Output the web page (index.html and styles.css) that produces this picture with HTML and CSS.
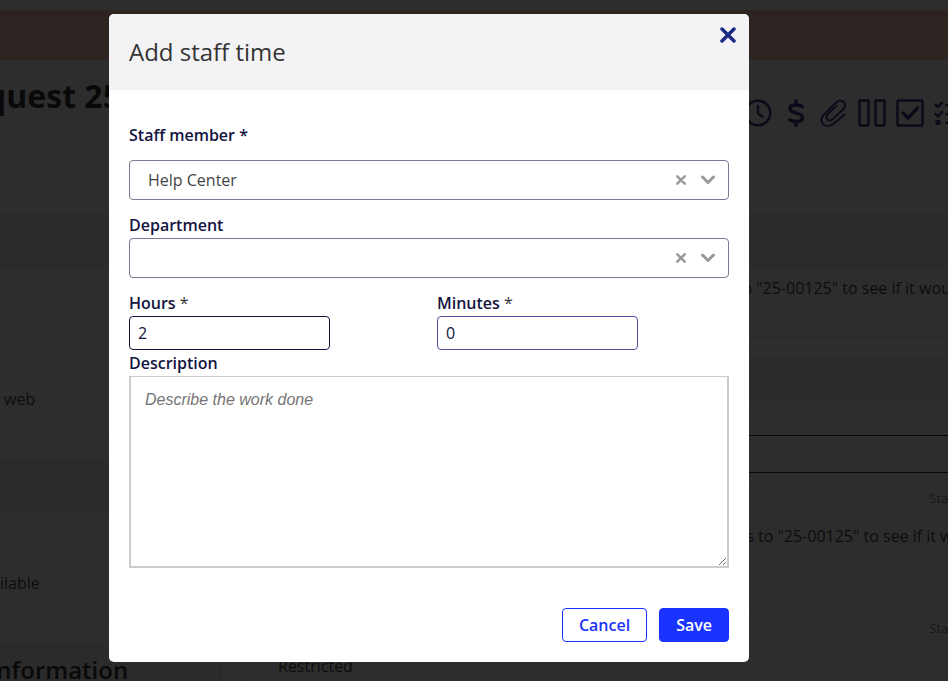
FILE: index.html
```html
<!DOCTYPE html>
<html lang="en">
	<head>
		<meta charset="UTF-8">
		<title>Add staff time</title>
		<link rel="stylesheet" href="styles.css">
	</head>
	<body>
		<div class="page" aria-hidden="true">
			<div class="banner"></div>
			<div class="page-head">
				<h1>Request 25-00125</h1>
				<div class="tools">
					<svg viewBox="0 0 28 28"><circle cx="14" cy="14" r="12.3"/><path d="M14 7v7.500l4.500 3"/></svg>
					<svg viewBox="0 0 28 28"><path class="thick" d="M14 1.700v4M14 22.300v4M20.300 7.500C17 5.500 7.800 4.500 7.800 9.800c0 5.200 12.600 3 12.600 8.600 0 5.500-9.400 4.400-12.700 2.300"/></svg>
					<svg viewBox="0 0 28 28"><path class="thin" d="M24.500 15.500L14 24.500C10 28 5 27.500 3 25 .5 22 1 18.500 4 15.500L15.500 4C18 1.200 21.500 1 23.500 2.800c2.200 2 2 5.200-.5 7.700L12.500 20.200c-1.500 1.500-3.700 1.600-5 .3-1.500-1.500-1.200-3.700.3-5.300l8.700-8.400"/></svg>
					<svg viewBox="0 0 28 28"><rect x="1.500" y="1.500" width="9" height="25" rx="1"/><rect x="17.500" y="1.500" width="9" height="25" rx="1"/></svg>
					<svg viewBox="0 0 28 28"><rect x="1.500" y="1.500" width="25" height="25" rx="1"/><path class="thick" d="M7 14l5 5 9.500-10"/></svg>
					<svg viewBox="0 0 28 28"><path d="M1.500 5.500l2.500 2.500L8 3.500M1.500 15l2.500 2.500L8 13M12.500 6.300h14M12.500 15.300h14M12.500 23.700h14"/><circle cx="4" cy="23.500" r="1.500"/></svg>
				</div>
			</div>
			<div class="columns">
				<div class="side">
					<div class="card">
						<div class="card-head"></div>
						<div class="card-body tall">via web</div>
					</div>
					<div class="card">
						<div class="card-head"></div>
						<div class="card-body status">Available</div>
					</div>
					<div class="card">
						<div class="card-head"><h2>Information</h2></div>
						<div class="card-body"></div>
					</div>
				</div>
				<div class="main">
					<div class="card">
						<div class="card-head"></div>
						<p class="message">I am testing if we can link the new request from the web over to "25-00125" to see if it would work</p>
					</div>
					<div class="card">
						<div class="card-head slim"></div>
						<div class="composer"></div>
						<div class="entry">
							<span class="tag">Staff</span>
							<p>I am testing this new request from the page to see if it now links to "25-00125" to see if it would work</p>
						</div>
						<div class="entry">
							<span class="tag">Staff</span>
							<p>Restricted</p>
						</div>
					</div>
				</div>
			</div>
		</div>

		<div class="overlay">
			<form class="modal" role="dialog" aria-labelledby="modal_title">
				<div class="modal-head">
					<h2 id="modal_title">Add staff time</h2>
					<button type="button" class="close" aria-label="Close">
						<svg viewBox="0 0 16 16"><path d="M2 2l12 12M14 2L2 14"/></svg>
					</button>
				</div>
				<div class="modal-body">
					<div class="field spaced">
						<label for="staff">Staff member *</label>
						<div class="picker">
							<select id="staff" name="staff"><option>Help Center</option></select>
							<button type="button" class="clear" aria-label="Clear staff member">
								<svg viewBox="0 0 10 10"><path d="M1.300 1.300l7.400 7.400M8.700 1.300L1.300 8.700"/></svg>
							</button>
							<svg class="arrow" viewBox="0 0 14 10"><path d="M1.500 2L7 7.500 12.500 2"/></svg>
						</div>
					</div>
					<div class="field">
						<label for="department">Department</label>
						<div class="picker">
							<select id="department" name="department"><option></option></select>
							<button type="button" class="clear" aria-label="Clear department">
								<svg viewBox="0 0 10 10"><path d="M1.300 1.300l7.400 7.400M8.700 1.300L1.300 8.700"/></svg>
							</button>
							<svg class="arrow" viewBox="0 0 14 10"><path d="M1.500 2L7 7.500 12.500 2"/></svg>
						</div>
					</div>
					<div>
						<div class="time">
							<div class="field">
								<label for="hours">Hours <span class="req">*</span></label>
								<input class="hours" type="text" id="hours" name="hours" value="2">
							</div>
							<div class="field">
								<label for="minutes">Minutes <span class="req">*</span></label>
								<input type="text" id="minutes" name="minutes" value="0">
							</div>
						</div>
						<div class="field">
							<label for="description">Description</label>
							<textarea id="description" name="description" placeholder="Describe the work done"></textarea>
						</div>
					</div>
				</div>
				<div class="modal-foot">
					<button type="button" class="btn">Cancel</button>
					<button type="submit" class="btn primary">Save</button>
				</div>
			</form>
		</div>
	</body>
</html>
```
FILE: styles.css
```css
*{
	box-sizing:border-box;
	margin:0;
	padding:0;
}
body{
	font:16px/24px "Open Sans","Noto Sans",sans-serif;
	color:#333;
	background:#fff;
	height:100vh;
	overflow:hidden;
}
button,input,select{
	font:inherit;
}
svg{
	display:block;
	fill:none;
	stroke:currentColor;
	stroke-width:3;
	stroke-linecap:round;
	stroke-linejoin:round;
}

/* request page */
.page{
	margin:0 -38px 0 -54px;
	padding-top:10px;
	color:#222;
}
.banner{
	height:50px;
	background:#ffb5a7;
}
.page-head{
	display:flex;
	justify-content:space-between;
	height:155px;
	padding:14px 24px 0 0;
}
.page-head h1{
	font-size:32px;
	line-height:44px;
	color:#000;
}
.tools{
	display:flex;
	gap:10px;
	padding-top:25px;
	color:#0b0f70;
}
.tools svg{
	width:28px;
	height:28px;
	stroke-width:2.500;
}
.tools .thick{
	stroke-width:3.500;
}
.tools .thin{
	stroke-width:2;
}
.columns{
	display:grid;
	grid-template-columns:276px minmax(0,1fr);
	gap:23px;
}
.side,.main{
	display:flex;
	flex-direction:column;
	gap:22px;
}
.card{
	border:1px solid #dcdce0;
}
.card-head{
	height:52px;
	padding:8px 42px;
	background:#ececf6;
}
.card-head.slim{
	height:42px;
}
.card-head h2{
	font-size:24px;
	font-weight:600;
	line-height:34px;
	color:#000;
}
.card-body{
	display:flex;
	align-items:flex-end;
	height:107px;
	padding:0 32px 27px;
}
.card-body.tall{
	height:170px;
}
.card-body.status{
	padding:0 26px 26px;
}
.message{
	height:68px;
	padding:8px 32px;
	white-space:nowrap;
}
.composer{
	height:38px;
	margin:33px 0 8px;
	border:solid #000;
	border-width:1px 0;
}
.entry{
	height:130px;
	padding:6px 28px 0 32px;
	border-top:1px solid #e6e6e6;
	white-space:nowrap;
}
.entry p{
	padding-top:16px;
}
.tag{
	display:block;
	font-size:13px;
	line-height:20px;
	text-align:right;
	color:#666;
}

/* dialog */
.overlay{
	position:fixed;
	inset:0;
	display:flex;
	justify-content:center;
	align-items:flex-start;
	padding:14px 90px 0 0;
	background:rgba(10,10,10,.86);
}
.modal{
	width:640px;
	background:#fff;
	border-radius:5px;
	overflow:hidden;
}
.modal-head{
	display:flex;
	justify-content:space-between;
	align-items:flex-start;
	padding:12px;
	background:#f3f3f6;
}
.modal-head h2{
	padding:10px 8px;
	font-size:24px;
	font-weight:400;
	line-height:32px;
}
.close{
	padding:1px;
	border:none;
	background:none;
	color:#1c2a80;
	cursor:pointer;
}
.close svg{
	width:16px;
	height:16px;
	stroke-width:3.500;
}
.modal-body{
	display:flex;
	flex-direction:column;
	gap:12px;
	padding:32px 20px 40px;
}
.field{
	display:flex;
	flex-direction:column;
}
.field.spaced{
	gap:12px;
}
.field label{
	font-weight:600;
	line-height:26px;
	color:#14143f;
}
.req{
	font-weight:400;
	color:#333;
}
.picker{
	display:flex;
	align-items:center;
	height:40px;
	padding-right:13px;
	border:1px solid #7b7894;
	border-radius:4px;
	color:#999;
}
.picker select{
	flex:1;
	height:100%;
	padding-left:18px;
	border:none;
	background:none;
	color:#444;
	appearance:none;
}
.clear{
	padding:4px;
	border:none;
	background:none;
	color:inherit;
}
.clear svg{
	width:10px;
	height:10px;
	stroke-width:2.500;
}
.arrow{
	width:14px;
	height:10px;
	margin-left:11px;
}
.time{
	display:grid;
	grid-template-columns:1fr 1fr;
	gap:16px;
}
.field input{
	width:201px;
	height:34px;
	padding:0 8px;
	border:1px solid #4f4f9c;
	border-radius:4px;
	color:#14143f;
}
.field .hours{
	border-color:#14143f;
}
textarea{
	height:192px;
	padding:12px 14px;
	border:2px solid #ccc;
	border-top-width:1px;
	font:16px/22px "Liberation Sans",Arial,sans-serif;
	resize:vertical;
}
textarea::placeholder{
	font-style:italic;
	color:#757575;
}
.modal-foot{
	display:flex;
	justify-content:flex-end;
	gap:12px;
	padding:0 20px 20px;
}
.btn{
	height:34px;
	padding:0 16px;
	border:1px solid #1a33ff;
	border-radius:4px;
	background:#fff;
	font-weight:600;
	color:#1a33ff;
	cursor:pointer;
}
.btn.primary{
	background:#1a33ff;
	color:#fff;
}
```
